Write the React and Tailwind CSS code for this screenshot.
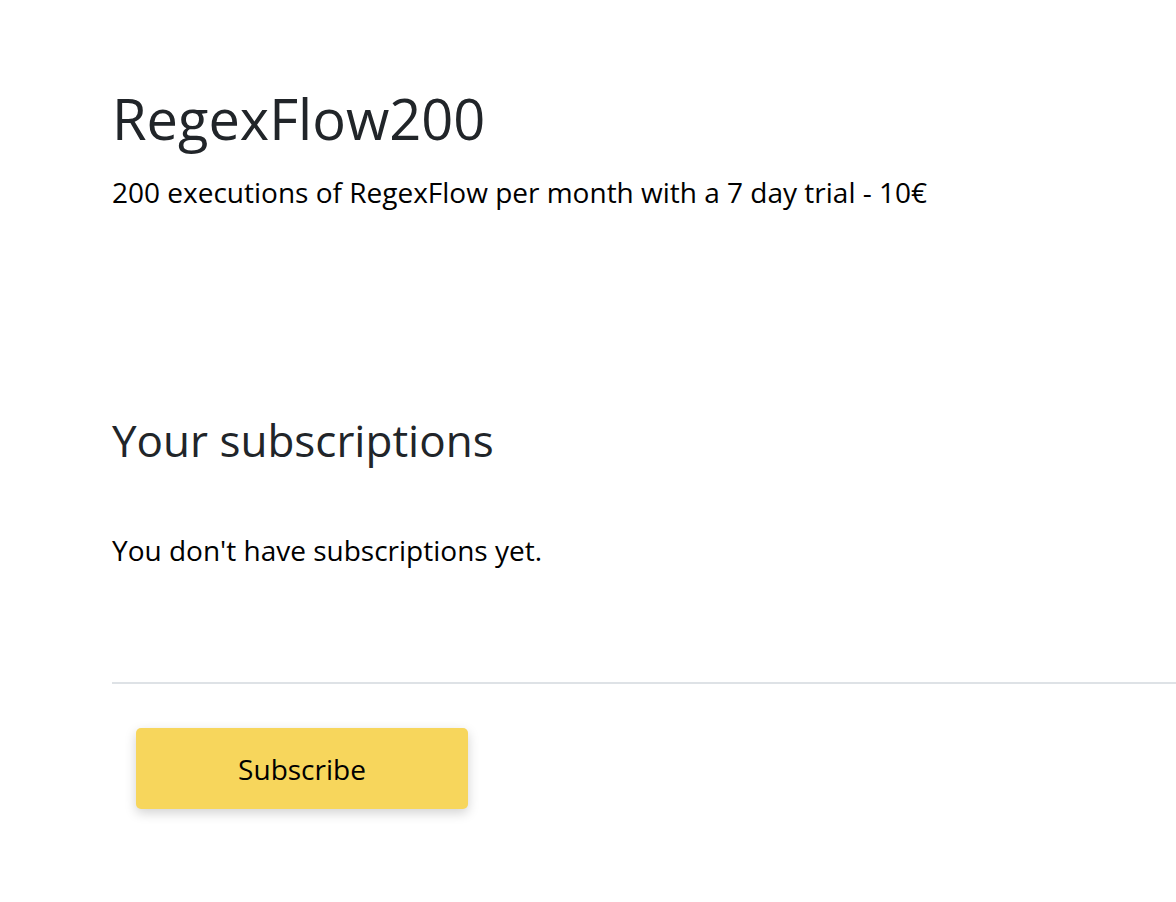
export default function App() {
  return (
    <div className="min-h-[902px] bg-white pl-[112px] pt-[78px]" style={{ fontFamily: '"Open Sans", sans-serif' }}>
      <h1 className="text-[56px] leading-[80px] text-[#212529] font-normal">RegexFlow200</h1>
      <p className="mt-[16px] text-[28px] leading-[36px] text-black">200 executions of RegexFlow per month with a 7 day trial - 10€</p>
      <h2 className="mt-[200px] text-[44px] leading-[60px] text-[#212529] font-normal">Your subscriptions</h2>
      <p className="mt-[62px] text-[28px] leading-[36px] text-black">You don't have subscriptions yet.</p>
      <div className="mt-[114px] h-[2px] bg-[#dee2e6]" />
      <div className="pl-[24px] pt-[44px]">
        <button className="w-[332px] h-[81px] rounded-[5px] bg-[#f7d65c] text-[28px] text-black shadow-[0_4px_12px_rgba(0,0,0,0.18)]">Subscribe</button>
      </div>
    </div>
  );
}
